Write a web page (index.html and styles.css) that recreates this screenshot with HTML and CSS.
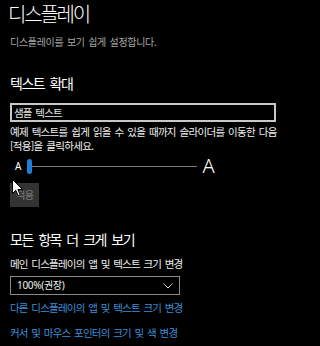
FILE: index.html
```html
<!DOCTYPE html>
<html lang="ko">
<head>
<meta charset="utf-8">
<link rel="stylesheet" href="styles.css">
</head>
<body>
<div class="page">
  <h1 class="title">디스플레이</h1>
  <p class="subtitle">디스플레이를 보기 쉽게 설정합니다.</p>
  <h2 class="heading">텍스트 확대</h2>
  <div class="sample">샘플 텍스트</div>
  <p class="hint">예제 텍스트를 쉽게 읽을 수 있을 때까지 슬라이더를 이동한 다음<br>[적용]을 클릭하세요.</p>
  <div class="slider">
    <span class="a-small">A</span>
    <span class="thumb"></span>
    <span class="track"></span>
    <span class="a-big">A</span>
  </div>
  <div class="apply">적용</div>
  <h2 class="heading heading-2">모든 항목 더 크게 보기</h2>
  <p class="label">메인 디스플레이의 앱 및 텍스트 크기 변경</p>
  <div class="select">
    <span class="select-value">100%(권장)</span>
    <svg class="chevron" width="10" height="6" viewBox="0 0 10 6"><path d="M0.5 0.5 L5 5 L9.5 0.5" fill="none" stroke="#cfcfcf" stroke-width="1"/></svg>
  </div>
  <a class="link link-1">다른 디스플레이의 앱 및 텍스트 크기 변경</a>
  <a class="link link-2">커서 및 마우스 포인터의 크기 및 색 변경</a>
  <svg class="cursor" width="12" height="18" viewBox="0 0 12 18"><path d="M0.5 0.5 L0.5 14.5 L3.8 11.3 L6.2 16.8 L8.2 15.9 L5.9 10.5 L10.5 10.5 Z" fill="#fff" stroke="#000" stroke-width="1"/></svg>
</div>
</body>
</html>
```
FILE: styles.css
```css
html, body {
  margin: 0;
  padding: 0;
  background: #000;
}
body {
  font-family: "Noto Sans", "Noto Sans CJK KR", sans-serif;
  color: #fff;
}
.page {
  position: relative;
  width: 320px;
  height: 346px;
  overflow: hidden;
  padding-left: 10px;
  box-sizing: border-box;
}
.title {
  margin: 0 0 0 -2px;
  font-family: "Noto Sans CJK KR", sans-serif;
  font-weight: 300;
  font-size: 20px;
  line-height: 28px;
  letter-spacing: -2.2px;
  color: #fff;
}
.subtitle {
  margin: 6px 0 0;
  font-family: "Noto Sans CJK KR", sans-serif;
  font-size: 10px;
  line-height: 16px;
  letter-spacing: -0.3px;
  word-spacing: 1px;
  color: #a6a6a6;
}
.heading {
  margin: 23px 0 0;
  font-family: "Noto Sans CJK KR", sans-serif;
  font-weight: 400;
  font-size: 14px;
  line-height: 20px;
  letter-spacing: -1.5px;
  word-spacing: 3px;
  color: #fff;
}
.sample {
  margin-top: 10px;
  width: 266px;
  height: 19px;
  box-sizing: border-box;
  border: 2px solid #c8c8c8;
  padding-left: 2px;
  font-family: "Noto Sans CJK KR", sans-serif;
  font-size: 10.5px;
  line-height: 15px;
  letter-spacing: -0.8px;
  word-spacing: 1.5px;
  color: #e6e6e6;
}
.hint {
  margin: 3px 0 0;
  font-family: "Noto Sans CJK KR", sans-serif;
  font-size: 10.5px;
  line-height: 14px;
  letter-spacing: -0.7px;
  word-spacing: 1.5px;
  color: #f0f0f0;
}
.slider {
  margin-top: 3px;
  height: 20px;
  display: flex;
  align-items: center;
}
.a-small {
  flex: none;
  margin-left: 5px;
  font-family: "Noto Sans", sans-serif;
  font-size: 10px;
  line-height: 14px;
  color: #fff;
}
.thumb {
  flex: none;
  margin-left: 6px;
  width: 5px;
  height: 15px;
  border-radius: 3px;
  background: #1d7fd8;
}
.track {
  flex: 0 0 165px;
  height: 1px;
  background: #7a7a7a;
}
.a-big {
  flex: none;
  margin-left: 5px;
  font-family: "Noto Sans", sans-serif;
  font-weight: 300;
  font-size: 20px;
  line-height: 20px;
  color: #fff;
}
.apply {
  margin-top: 7px;
  width: 29px;
  height: 24px;
  background: #333;
  color: #7b7b7b;
  font-family: "Noto Sans CJK KR", sans-serif;
  font-size: 10.5px;
  letter-spacing: -0.8px;
  line-height: 24px;
  text-align: center;
}
.heading-2 {
  margin-top: 22px;
}
.label {
  margin: 7px 0 0;
  font-family: "Noto Sans CJK KR", sans-serif;
  font-size: 10.5px;
  line-height: 16px;
  letter-spacing: -0.8px;
  word-spacing: 1.5px;
  color: #f0f0f0;
}
.select {
  margin-top: 4px;
  width: 170px;
  height: 19px;
  box-sizing: border-box;
  border: 1px solid #8a8a8a;
  display: flex;
  align-items: center;
  justify-content: space-between;
  padding: 0 6px 0 6px;
}
.select-value {
  font-family: "Noto Sans", "Noto Sans CJK KR", sans-serif;
  font-size: 10px;
  letter-spacing: -0.3px;
  line-height: 17px;
  color: #f0f0f0;
}
.link {
  display: block;
  font-family: "Noto Sans CJK KR", sans-serif;
  font-size: 10.5px;
  line-height: 16px;
  letter-spacing: -0.8px;
  word-spacing: 1.5px;
  color: #3b8fd9;
}
.link-1 {
  margin-top: 5px;
}
.link-2 {
  margin-top: 9px;
}
.cursor {
  position: absolute;
  left: 12px;
  top: 179px;
}
```
